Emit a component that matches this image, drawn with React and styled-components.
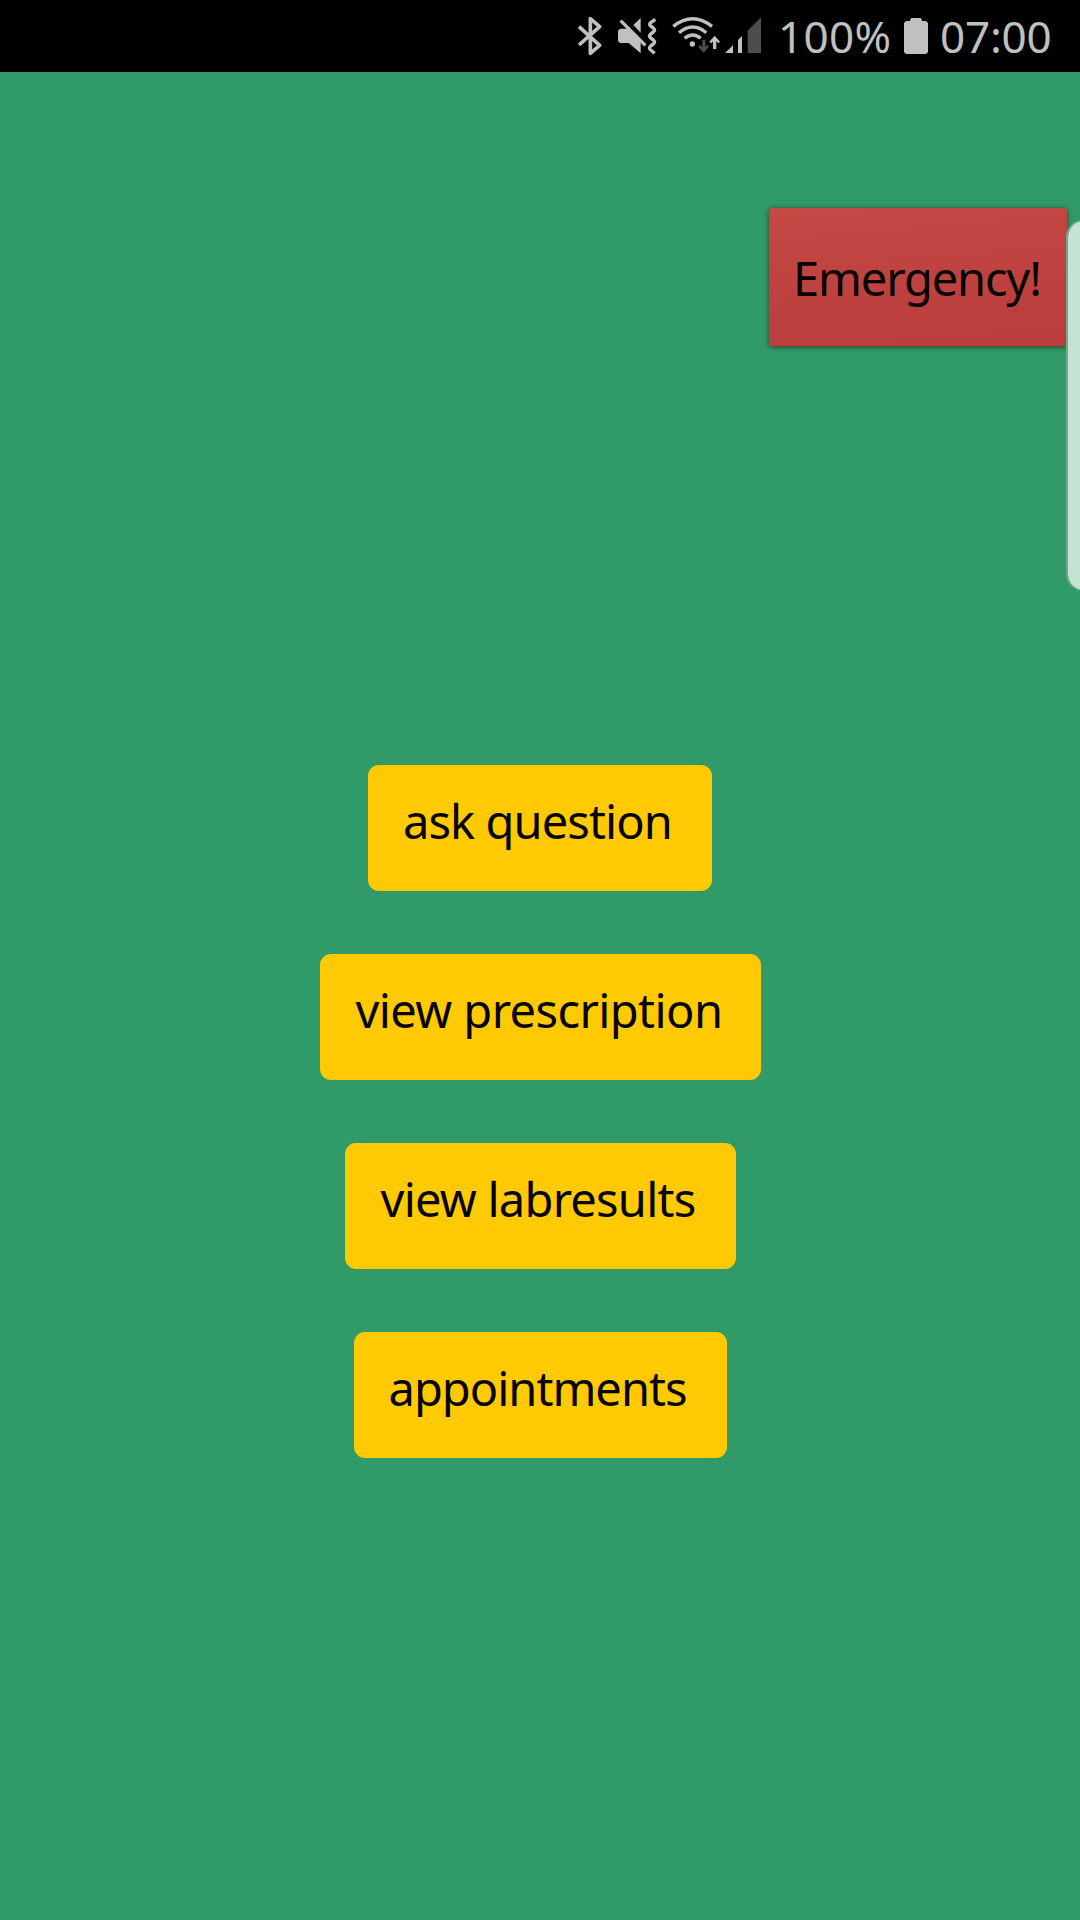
import React from "react";
import styled, { createGlobalStyle } from "styled-components";

const Global = createGlobalStyle`
  * { box-sizing: border-box; }
  body { margin: 0; background: #309b69; }
`;

const Screen = styled.div`
  position: relative;
  display: flex;
  flex-direction: column;
  width: 1080px;
  height: 1920px;
  overflow: hidden;
  background: #309b69;
  color: #050400;
  font-family: "Noto Sans", "Open Sans", sans-serif;
`;

const StatusBar = styled.header`
  display: flex;
  align-items: flex-start;
  justify-content: flex-end;
  height: 72px;
  padding: 12px 28px 0 0;
  background: #000;
  color: #c0c0c0;
`;

const Icon = styled.svg`
  display: block;
  flex: none;
  width: ${(p) => p.$w}px;
  height: 48px;
  margin-right: ${(p) => p.$gap || 0}px;
`;

const StatusText = styled.span`
  flex: none;
  width: ${(p) => p.$w}px;
  font-size: 44px;
  line-height: 48px;
  letter-spacing: ${(p) => p.$track}px;
  white-space: nowrap;
`;

const TopRow = styled.div`
  display: flex;
  justify-content: flex-end;
  padding: 136px 13px 0 0;
`;

const EmergencyButton = styled.button`
  width: 298px;
  height: 138px;
  padding: 1px 0 0 24px;
  border: 0;
  border-radius: 4px;
  background: linear-gradient(175deg, #c44844, #b83d3b);
  box-shadow: 0 1px 4px 1px rgba(50, 45, 25, 0.65);
  color: #080202;
  font: 47px/60px "Noto Sans", "Open Sans", sans-serif;
  letter-spacing: -1.15px;
  text-align: left;
  white-space: nowrap;
`;

const Menu = styled.nav`
  display: flex;
  flex-direction: column;
  align-items: center;
  gap: 63px;
  margin-top: 419px;
`;

const MenuButton = styled.button`
  width: ${(p) => p.$w}px;
  height: 126px;
  padding: 26px 0 40px ${(p) => p.$pad}px;
  border: 0;
  border-radius: 11px;
  background: #ffc904;
  color: #050400;
  font: 47px/60px "Noto Sans", "Open Sans", sans-serif;
  letter-spacing: ${(p) => p.$track}px;
  text-align: left;
  white-space: nowrap;
`;

const EdgeHandle = styled.div`
  position: absolute;
  top: 220px;
  right: -20px;
  width: 34px;
  height: 371px;
  border: 1px solid #74a58e;
  border-left-width: 2px;
  border-radius: 18px;
  background: #c3e3d3;
  background-clip: padding-box;
`;

const items = [
  { label: "ask question", w: 344, pad: 35, track: -0.9 },
  { label: "view prescription", w: 441, pad: 36, track: -0.58 },
  { label: "view labresults", w: 391, pad: 36, track: -0.75 },
  { label: "appointments", w: 373, pad: 35, track: -0.98 },
];

export default function App() {
  return (
    <Screen>
      <Global />
      <StatusBar>
        <Icon $w={24} $gap={16} viewBox="54 36 72 144">
          <path d="M57 80L119 136L91 160V56L119 80L57 135" fill="none" stroke="currentColor" strokeWidth="11" strokeLinejoin="round" />
        </Icon>
        <Icon $w={40} $gap={14} viewBox="174 36 120 144">
          <path d="M242 54V98L220 75ZM180 86H203L242 126V160L206 129H180L174 123V92Z" fill="currentColor" />
          <path d="M182 62L256 136" stroke="currentColor" strokeWidth="10" />
          <path d="M286 58L273 67Q266 72 271 77L281 85Q286 90 281 95L271 103Q266 108 271 113L281 121Q286 126 281 131L271 139Q266 144 271 149L284 160" fill="none" stroke="currentColor" strokeWidth="10" />
        </Icon>
        <Icon $w={49} $gap={4} viewBox="336 36 147 144">
          <g fill="none" stroke="currentColor" strokeWidth="10">
            <path d="M340 79Q398 33 456 79" />
            <path d="M357 98Q398 64 439 98" />
            <path d="M374 115Q398 95 422 115" />
          </g>
          <circle cx="397" cy="132" r="8" fill="currentColor" />
          <path d="M427 120H436V141L442 135L447 140L431 158L415 141L420 135L427 141Z" fill="#4d4d4d" />
          <path d="M464 107L480 125L475 130L469 124V147H459V124L454 130L448 125Z" fill="currentColor" />
        </Icon>
        <Icon $w={36} $gap={17} viewBox="498 36 108 144">
          <path d="M498 159L522 136V159ZM537 159V120L549 108V159Z" fill="currentColor" />
          <path d="M566 159V92L606 52V159Z" fill="#4d4d4d" />
        </Icon>
        <StatusText $w={126} $track={0.3}>100%</StatusText>
        <Icon $w={24} $gap={12} viewBox="0 0 24 48">
          <path d="M7 6H17L18 9H22L24 11V40L22 42H2L0 40V11L2 9H6Z" fill="currentColor" />
        </Icon>
        <StatusText $w={112} $track={-0.2}>07:00</StatusText>
      </StatusBar>
      <TopRow>
        <EmergencyButton>Emergency!</EmergencyButton>
      </TopRow>
      <Menu>
        {items.map((item) => (
          <MenuButton key={item.label} $w={item.w} $pad={item.pad} $track={item.track}>
            {item.label}
          </MenuButton>
        ))}
      </Menu>
      <EdgeHandle />
    </Screen>
  );
}
